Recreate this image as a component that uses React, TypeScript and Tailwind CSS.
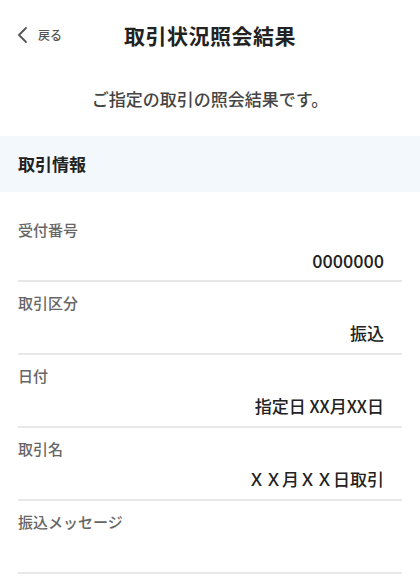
import React from "react";

const rows: { label: string; value: string; size?: string }[] = [
  { label: "受付番号", value: "0000000", size: "text-[18px]" },
  { label: "取引区分", value: "振込" },
  { label: "日付", value: "指定日 XX月XX日" },
  { label: "取引名", value: "ＸＸ月ＸＸ日取引" },
  { label: "振込メッセージ", value: "" },
];

export default function App() {
  return (
    <div
      className="w-[420px] h-[584px] bg-white overflow-hidden"
      style={{ fontFamily: '"Noto Sans CJK JP", "Noto Sans", sans-serif' }}
    >
      <header className="relative h-[70px] flex items-center justify-center">
        <div className="absolute left-[16px] top-[26px] flex items-center gap-[8px] text-[#555]">
          <svg width="14" height="18" viewBox="0 0 14 18" fill="none">
            <path d="M10 2 L3 9 L10 16" stroke="#555" strokeWidth="1.8" strokeLinecap="round" strokeLinejoin="round" />
          </svg>
          <span className="text-[12px] leading-[18px] font-medium">戻る</span>
        </div>
        <h1 className="text-[21px] leading-[28px] font-bold text-[#222] tracking-[0.5px]">
          取引状況照会結果
        </h1>
      </header>
      <p className="text-center text-[17px] leading-[24px] text-[#444] font-medium mt-[17px]">
        ご指定の取引の照会結果です。
      </p>
      <div className="mt-[25px] h-[56px] bg-[#f3f8fd] flex items-center px-[18px]">
        <span className="text-[17px] font-bold text-[#222]">取引情報</span>
      </div>
      <div className="mt-[17px] mx-[18px] flex flex-col">
        {rows.map((r) => (
          <div key={r.label} className="border-b-2 border-[#e8e8e8] pt-[11px] pb-[8px]">
            <div className="text-[15px] leading-[20px] text-[#666] font-medium">{r.label}</div>
            <div
              className={`mt-[8px] h-[24px] pr-[18px] text-right leading-[24px] text-[#222] font-medium ${r.size ?? "text-[17px]"}`}
            >
              {r.value}
            </div>
          </div>
        ))}
      </div>
    </div>
  );
}
